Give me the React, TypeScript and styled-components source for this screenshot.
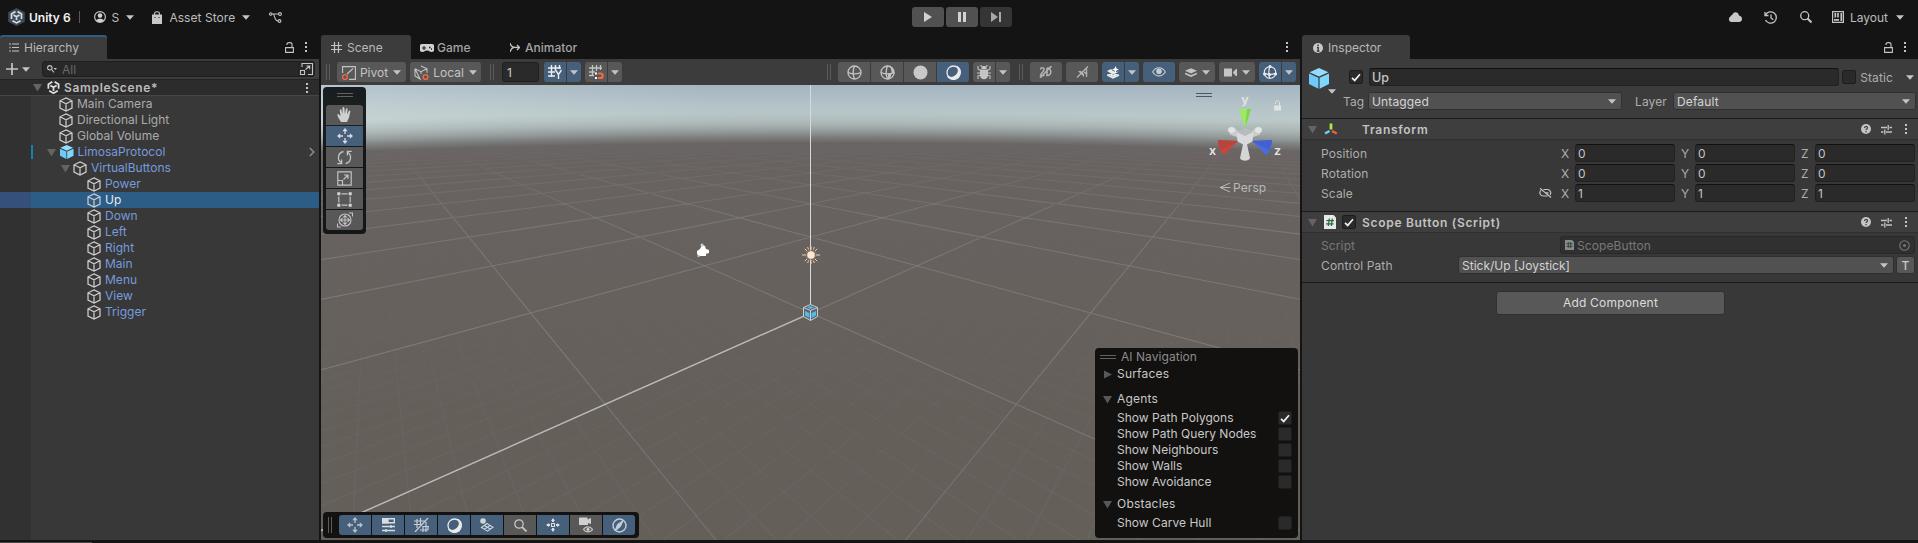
import React from 'react';
import styled, { createGlobalStyle, css } from 'styled-components';

const GlobalStyle = createGlobalStyle`
  * { box-sizing: border-box; }
  html, body { margin: 0; padding: 0; background: #141414; overflow: hidden; }
  body { font-family: Inter, "Liberation Sans", sans-serif; font-size: 12px; color: #c4c4c4; letter-spacing: 0; }
`;

/* ---------- shell ---------- */
const Window = styled.div`
  width: 1918px; height: 543px; background: #141414;
  display: flex; flex-direction: column; overflow: hidden;
`;
const AppBar = styled.header`
  height: 35px; flex: none; display: grid; grid-template-columns: 912px 100px 1fr;
  align-items: start; background: #141414;
`;
const BarGroup = styled.div<{ $end?: boolean }>`
  height: 34px; display: flex; align-items: center;
  ${p => p.$end && css`justify-content: flex-end; padding-right: 14px;`}
`;
const BarItem = styled.span<{ $ml?: number; $bold?: boolean; $spacing?: number }>`
  margin-left: ${p => p.$ml ?? 0}px; white-space: nowrap;
  font-weight: ${p => (p.$bold ? 600 : 400)};
  color: ${p => (p.$bold ? '#f2f2f2' : '#bcbcbc')};
  letter-spacing: ${p => p.$spacing ?? 0.1}px;
`;
const BarRule = styled.i`width: 1px; height: 12px; background: #5a5a5a; margin-left: 8px;`;
const PlayGroup = styled.div`display: flex; gap: 2px; padding-top: 7px;`;
const PlayButton = styled.button<{ $off?: boolean }>`
  width: 32px; height: 20px; border: 0; padding: 0; border-radius: 3px;
  background: ${p => (p.$off ? '#353535' : '#515151')}; display: grid; place-items: center;
`;
const Workspace = styled.main`
  height: 505px; flex: none; display: grid; grid-template-columns: 319px 979px 616px; column-gap: 2px;
`;
const Footer = styled.footer`height: 3px; padding-top: 2px;`;
const FooterMark = styled.div`width: 92px; height: 1px; background: #454545;`;

/* ---------- panels ---------- */
const Panel = styled.section`display: flex; flex-direction: column; min-width: 0;`;
const TabStrip = styled.div`height: 24px; flex: none; display: flex; align-items: center; background: #141414;`;
const Tab = styled.div<{ $w: number; $active?: boolean; $focus?: boolean; $pad?: number; $gap?: number }>`
  width: ${p => p.$w}px; height: 24px; display: flex; align-items: center;
  gap: ${p => p.$gap ?? 5}px; padding: 1px 0 0 ${p => p.$pad ?? 9}px; border-radius: 3px 3px 0 0; white-space: nowrap;
  color: ${p => (p.$active ? '#b8b8b8' : '#a4a4a4')};
  font-weight: ${p => (p.$active ? 400 : 500)};
  background: ${p => (p.$active ? '#3c3c3c' : 'transparent')};
  box-shadow: ${p => (p.$focus ? 'inset 0 2px 0 #2c5d87' : 'none')};
`;
const TabTools = styled.div<{ $gap?: number; $pr: number }>`
  margin-left: auto; padding-right: ${p => p.$pr}px; display: flex; align-items: center; gap: ${p => p.$gap ?? 0}px;
`;

/* ---------- hierarchy ---------- */
const SearchRow = styled.div`
  height: 20px; flex: none; background: #3c3c3c; display: flex; align-items: center; padding: 0 4px 0 6px;
`;
const SearchField = styled.div`
  margin-left: 12px; flex: 1; height: 16px; background: #282828; border: 1px solid #1e1e1e;
  border-radius: 3px; display: flex; align-items: center; color: #686868; padding-left: 4px;
  & > span { margin-left: 5px; }
  & > svg:last-child { margin-left: auto; }
`;
const Tree = styled.div`flex: 1; display: flex; flex-direction: column; background: linear-gradient(90deg, #313131 31px, #383838 31px);`;
const SceneRow = styled.div`
  height: 17px; flex: none; display: flex; align-items: center; padding-left: 33px; padding-right: 10px;
  background: #2c2c2c; border-bottom: 1px solid #464646; border-top: 1px solid #222; font-weight: 600; color: #bdbdbd;
  letter-spacing: 0.68px;
  & > span { margin-left: 4px; }
  & > svg:last-child { margin-left: auto; }
`;
const TreeRow = styled.div<{ $x: number; $selected?: boolean; $prefab?: boolean }>`
  height: 16px; flex: none; display: flex; align-items: center; padding-left: ${p => p.$x}px; padding-right: 4px;
  color: ${p => (p.$selected ? '#e4ecf2' : p.$prefab ? '#769bdc' : '#ababab')};
  ${p => p.$selected && css`background: linear-gradient(90deg, #34507b 31px, #2c5d87 31px);`}
  & > span { margin-left: 4px; margin-top: -1px; letter-spacing: 0.02px; }
`;
const Override = styled.i`width: 2px; height: 14px; background: #0f81be; margin: 0 14px 0 31px;`;
const Chevron = styled.svg`margin-left: auto;`;

/* ---------- scene ---------- */
const SceneBar = styled.div`
  height: 26px; flex: none; background: #3c3c3c; display: flex; align-items: center; padding: 0 4px 0 5px;
`;
const Grip = styled.i<{ $ml?: number; $mr?: number; $h?: number }>`
  width: 4px; height: ${p => p.$h ?? 16}px; margin-left: ${p => p.$ml ?? 0}px; margin-right: ${p => p.$mr ?? 0}px;
  border-left: 1px solid #5c5c5c; border-right: 1px solid #5c5c5c; flex: none;
`;
const TopGrip = styled.i`
  display: block; width: 16px; height: 4px; border-top: 1px solid #636363; border-bottom: 1px solid #636363;
`;
const ToolButton = styled.button<{ $w?: number; $on?: boolean; $ml?: number; $shape?: string; $gap?: number }>`
  width: ${p => p.$w ?? 32}px; height: 20px; flex: none; border: 0; padding: 0;
  margin-left: ${p => p.$ml ?? 4}px; border-radius: ${p => p.$shape ?? '3px'};
  background: ${p => (p.$on ? '#46607c' : '#585858')};
  color: #c4c4c4; font: inherit; letter-spacing: inherit;
  display: flex; align-items: center; justify-content: center; gap: ${p => p.$gap ?? 5}px;
`;
const SizeInput = styled.div`
  width: 37px; height: 20px; margin-left: 8px; background: #2a2a2a; border: 1px solid #1f1f1f; border-radius: 3px;
  display: flex; align-items: center; padding-left: 4px; color: #d0d0d0;
`;
const Spacer = styled.i`flex: 1;`;
const Viewport = styled.div`position: relative; flex: 1; overflow: hidden; background: #67625d;`;
const Backdrop = styled.svg`display: block;`;
const ToolPalette = styled.div`
  position: absolute; left: 2px; top: 2px; width: 43px; height: 147px; border-radius: 4px; background: rgba(14, 16, 17, 0.93);
  display: flex; flex-direction: column; align-items: center; gap: 1px; padding-top: 6px;
  & > i { margin-bottom: 7px; }
`;
const ToolStrip = styled.div`
  position: absolute; left: 2px; top: 427px; width: 316px; height: 26px; border-radius: 4px; background: #131211;
  display: flex; align-items: center; padding-left: 5px;
`;
const NavPanel = styled.div`
  position: absolute; left: 774px; top: 263px; width: 203px; height: 190px; border-radius: 4px;
  background: rgba(15, 14, 13, 0.97); padding: 1px 6px 0 5px; letter-spacing: 0.03px; color: #c8c8c8;
`;
const NavRow = styled.div<{ $mt?: number; $head?: boolean; $dim?: boolean }>`
  height: 16px; margin-top: ${p => p.$mt ?? 0}px; display: flex; align-items: center;
  padding-left: ${p => (p.$dim ? 0 : p.$head ? 3 : 17)}px; gap: 5px; color: ${p => (p.$dim ? '#8c8c8c' : '#c8c8c8')};
  letter-spacing: ${p => (p.$dim ? 0.05 : p.$head ? 0.2 : 0.03)}px;
  & > div { margin-left: auto; }
`;
const NavLabel = styled.span`margin-top: -2px;`;
const GizmoView = styled.svg`position: absolute; left: 879px; top: 0; overflow: visible;`;

/* ---------- inspector ---------- */
const InspectorBody = styled.div`flex: 1; background: #383838; display: flex; flex-direction: column;`;
const ObjectHeader = styled.div`
  height: 60px; flex: none; background: #3c3c3c; border-bottom: 1px solid #1a1a1a; display: flex;
  padding: 9px 3px 0 7px;
`;
const ObjectIcon = styled.div`width: 34px; flex: none;`;
const HeaderLines = styled.div`flex: 1; display: flex; flex-direction: column; gap: 6px;`;
const Line = styled.div`height: 18px; display: flex; align-items: center;`;
const Check = styled.div`
  width: 14px; height: 14px; flex: none; background: #2a2a2a; border: 1px solid #1d1d1d; border-radius: 2px;
  display: grid; place-items: center;
`;
const Field = styled.div<{ $w?: number; $big?: boolean; $ml?: number }>`
  ${p => (p.$w ? css`width: ${p.$w}px; flex: none;` : css`flex: 1;`)}
  height: 18px; margin-left: ${p => p.$ml ?? 0}px; background: #2a2a2a; border: 1px solid #212121; border-top-color: #111;
  border-radius: 3px; padding-left: 2px; display: flex; align-items: center; color: #c4c4c4;
  font-size: ${p => (p.$big ? 12.5 : 12)}px; ${p => p.$big && css`font-weight: 500;`}
`;
const Dropdown = styled.div<{ $w: number; $spacing?: number }>`
  width: ${p => p.$w}px; height: 18px; background: #515151; border: 1px solid #303030; border-radius: 3px;
  display: flex; align-items: center; justify-content: space-between; padding: 0 5px 0 3px; color: #d4d4d4;
  letter-spacing: ${p => p.$spacing ?? 0.15}px;
`;
const Label = styled.span<{ $w?: number; $ml?: number; $dim?: boolean }>`
  ${p => p.$w && css`width: ${p.$w}px;`} margin-left: ${p => p.$ml ?? 0}px; flex: none; white-space: nowrap;
  color: ${p => (p.$dim ? '#787878' : '#adadad')}; letter-spacing: 0.12px;
`;
const ComponentHeader = styled.div`
  height: 21px; flex: none; background: #3e3e3e; border-bottom: 1px solid #303030; display: flex; align-items: center;
  padding: 0 10px 0 6px;
`;
const ComponentTitle = styled.h2<{ $ml: number }>`
  margin: 0 auto 0 ${p => p.$ml}px; font-size: 12px; font-weight: 600; color: #c2c2c2; letter-spacing: 0.7px;
`;
const HeaderTools = styled.div`display: grid; grid-template-columns: 20px 23px 4px; align-items: center;`;
const Properties = styled.div<{ $h: number; $pt: number }>`
  height: ${p => p.$h}px; flex: none; padding: ${p => p.$pt}px 3px 0 19px; display: flex; flex-direction: column; gap: 2px;
  border-bottom: 1px solid #1a1a1a;
`;
const Axis = styled(Label)`width: 14px; font-size: 12px;`;
const ObjectField = styled.div`
  width: 355px; height: 18px; background: #303030; border: 1px solid #292929; border-radius: 3px; display: flex;
  align-items: center; padding: 0 4px 0 3px; gap: 3px; color: #787878; letter-spacing: 0.1px;
  & > svg:last-child { margin-left: auto; }
`;
const TypeButton = styled.button`
  width: 19px; height: 18px; margin-left: 2px; border: 1px solid #303030; border-radius: 3px; background: #585858;
  color: #c8c8c8; font: 500 12px Inter, sans-serif; padding: 0;
`;
const AddButton = styled.button`
  width: 229px; height: 24px; margin: 8px 0 0 194px; border: 1px solid #303030; border-radius: 3px; background: #585858;
  color: #dcdcdc; font: 400 12px Inter, sans-serif; letter-spacing: 0.2px; padding: 0 0 1px;
`;

/* ---------- icons ---------- */
type G = { w?: number; h?: number; children?: React.ReactNode; ml?: number; sw?: number; c?: string };
const Svg = styled.svg<{ $ml: number }>`display: block; flex: none; margin-left: ${p => p.$ml}px;`;
const Gap = styled.i<{ $w: number }>`width: ${p => p.$w}px; flex: none;`;
const Icon = ({ w = 16, h = 16, children, ml = 0, sw = 1.1, c = '#c4c4c4' }: G) => (
  <Svg $ml={ml} width={w} height={h} viewBox={`0 0 ${w} ${h}`} fill="none" stroke={c} strokeWidth={sw}>{children}</Svg>
);
const Caret = ({ ml = 0, c = '#c4c4c4' }: { ml?: number; c?: string }) => (
  <Icon w={8} h={5} ml={ml}><path d="M0 .2h8L4 4.8z" fill={c} stroke="none" /></Icon>
);
const Fold = ({ closed = false, c = '#646464' }: { closed?: boolean; c?: string }) => (
  <Icon w={9} h={9}><path d={closed ? 'M1 .5v8L9 4.5z' : 'M0 1h9L4.5 8.5z'} fill={c} stroke="none" /></Icon>
);
const Dots = ({ ml = 0 }: { ml?: number }) => (
  <Icon w={4} h={12} ml={ml}><path d="M1 1h2v2H1zM1 5h2v2H1zM1 9h2v2H1z" fill="#c4c4c4" stroke="none" /></Icon>
);
const Lock = ({ ml = 0 }: { ml?: number }) => (
  <Icon w={9} h={11} ml={ml}><path d="M.6 5.600h7.800v4.800H.6zM2 3V2.200C2 1.200 2.800.6 4.300.6h.6C6.300.6 7 1.200 7 2.400v3.200" /></Icon>
);
const Cube = ({ c = '#cccccc' }: { c?: string }) => (
  <Icon w={14} h={15} c={c} sw={1.250}><path d="M7 .9l6 2.900v7.200l-6 3-6-3V3.800zM1 3.800l6 2.900 6-2.900M7 6.700v7.300" /></Icon>
);
const SolidCube = ({ size = 14 }: { size?: number }) => (
  <Svg $ml={0} width={size} height={size * 1.05} viewBox="0 0 20 21">
    <path d="M10 0l9.400 4.200L10 8.400.6 4.200z" fill="#93dcff" />
    <path d="M0 5.500l9.400 4.200v11L0 16z" fill="#6fcaf8" />
    <path d="M20 5.500l-9.400 4.200v11L20 16z" fill="#7fd6fd" />
  </Svg>
);
const UnityMark = ({ size = 14, c = '#e0e0e0' }: { size?: number; c?: string }) => (
  <Svg $ml={0} width={size} height={size} viewBox="0 0 14 14" fill="none" stroke={c} strokeWidth="1.900">
    <path d="M5.800.9L1.500 3.400v5M8.200.9l4.300 2.500v5M2.400 10.600L7 13.100l4.600-2.500M3.600 4.800L7 6.800l3.400-2M7 6.800v4" />
  </Svg>
);
const Tick = () => <Icon w={10} h={9} sw={1.700} c="#eee"><path d="M1 4.800l2.700 2.600L9 1.200" /></Icon>;
const MoveIcon = ({ c = '#d6dce2' }: { c?: string }) => (
  <Icon c={c} sw={1.300}>
    <path d="M8 2v4M8 10v4M2 8h4M10 8h4" />
    <path d="M8 0l2.700 3.200H5.300zM8 16l2.700-3.200H5.300zM0 8l3.200-2.700v5.400zM16 8l-3.200-2.700v5.400z" fill={c} stroke="none" />
  </Icon>
);
const HashGrid = ({ c = '#c4c4c4' }: { c?: string }) => (
  <Icon w={11} h={11} c={c} sw={1.200}><path d="M3.500 0v11M7.500 0v11M0 3.500h11M0 7.500h11" /></Icon>
);
const Help = () => (
  <Icon w={10} h={10}><circle cx="5" cy="5" r="5" fill="#c4c4c4" stroke="none" /><path d="M3.500 4c0-2 3-2 3-.2 0 1.200-1.500 1-1.500 2.300M5 7v1.200" stroke="#3a3a3a" strokeWidth="1.200" /></Icon>
);
const Preset = () => (
  <Icon w={11} h={11} sw={1.300}><path d="M0 3.500h6M8.500 3.500H11M0 8h2.500M5 8h6M7.200 1v5M3.800 5.500v5" /></Icon>
);
const Script = ({ dim = false }: { dim?: boolean }) => (
  <Icon w={dim ? 9 : 12} h={dim ? 10 : 14} ml={dim ? 1 : 0}>
    {dim ? <><path d="M0 0h7l2 2v8H0z" fill="#8a8a8a" stroke="none" /><path d="M3.300 2v6M5.700 2v6M1.500 3.700h6M1.500 6.300h6" stroke="#2d5138" strokeWidth="1" /></>
      : <><path d="M0 0h9.500L12 2.500V14H0z" fill="#e8e8e8" stroke="none" /><path d="M5.300 3.500l-1 7.500M8.300 3.500l-1 7.500M2.500 5.700h7.500M2 8.800h7.500" stroke="#256c37" strokeWidth="1.200" /></>}
  </Icon>
);

const Sphere = ({ kind }: { kind: number }) => (
  <Icon w={15} h={15} sw={1.300} c={kind === 3 ? '#e8e8e8' : '#c4c4c4'}>
    {kind === 2 ? <circle cx="7.500" cy="7.500" r="7" fill="#c8c8c8" stroke="none" /> : <>
      {kind === 1 && <path d="M7.500 14.500A7 7 0 0 0 14.500 7.500C12 9 11 8.500 8 8.500z M9 .8A7 7 0 0 1 9 14.300C13 10 12 4 9 .8z" fill="#c4c4c4" stroke="none" />}
      {kind === 3 && <path d="M11 1.500a6.800 6.800 0 0 1-9.500 9.500A6.800 6.800 0 0 0 14 9 6.800 6.800 0 0 0 11 1.500z" fill="#f0f0f0" />}
      <circle cx="7.500" cy="7.500" r="6.500" />
      {kind < 2 && <path d="M1 7.500c4 1.800 9 1.800 13 0M7.500 1c-1.700 4-1.700 9 0 13" />}
    </>}
  </Icon>
);

/* ---------- scene backdrop ---------- */
const HORIZON = 33;
const DEPTH = 1.568;
const project = (i: number, j: number): [number, number] => {
  const t = DEPTH + (i + j) / 2;
  return [489.8 + (439 * (i - j)) / 2 / t, HORIZON + 305.8 / t];
};
const gridLine = (k: number, flip: boolean) => {
  const near = -2 * DEPTH - k + 1.1;
  const a = flip ? project(near, k) : project(k, near);
  const b = flip ? project(60, k) : project(k, 60);
  return `M${a[0].toFixed(1)} ${a[1].toFixed(1)}L${b[0].toFixed(1)} ${b[1].toFixed(1)}`;
};
const majors = Array.from({ length: 50 }, (_, n) => n - 12);
const minors = Array.from({ length: 140 }, (_, n) => (n - 70) / 10).filter(v => !Number.isInteger(v));
const pathFor = (ks: number[]) => ks.map(k => gridLine(k, false) + gridLine(k, true)).join('');

const SceneBackdrop = () => (
  <Backdrop width={979} height={455} viewBox="0 0 979 455" fill="none">
    <defs>
      <linearGradient id="sky" x1="0" y1="0" x2="0" y2="75" gradientUnits="userSpaceOnUse">
        <stop offset="0" stopColor="#a4b4c1" /><stop offset=".25" stopColor="#b3c2c8" />
        <stop offset=".48" stopColor="#bccac9" /><stop offset="1" stopColor="#aab5b5" />
      </linearGradient>
      <linearGradient id="haze" x1="0" y1="0" x2="1" y2="0">
        <stop offset="0" stopColor="#dfeaea" stopOpacity=".32" /><stop offset=".4" stopColor="#dfeaea" stopOpacity="0" />
      </linearGradient>
      <radialGradient id="ground" cx="510" cy="13000" r="13000" gradientUnits="userSpaceOnUse">
        <stop offset="0" stopColor="#655f5a" /><stop offset=".975" stopColor="#655f5a" /><stop offset=".9945" stopColor="#686361" />
        <stop offset=".99555" stopColor="#6a6565" /><stop offset=".9960" stopColor="#767676" stopOpacity=".9" />
        <stop offset=".9970" stopColor="#98a0a0" stopOpacity=".5" /><stop offset=".9980" stopColor="#a8b2b2" stopOpacity="0" />
      </radialGradient>
      <linearGradient id="fadeMajor" x1="0" y1="0" x2="0" y2="455" gradientUnits="userSpaceOnUse">
        <stop offset=".12" stopColor="#fff" stopOpacity="0" /><stop offset=".18" stopColor="#fff" stopOpacity=".25" />
        <stop offset=".3" stopColor="#fff" stopOpacity=".8" /><stop offset=".55" stopColor="#fff" stopOpacity="1" /><stop offset="1" stopColor="#fff" stopOpacity=".7" />
      </linearGradient>
      <linearGradient id="fadeMinor" x1="0" y1="0" x2="0" y2="455" gradientUnits="userSpaceOnUse">
        <stop offset=".3" stopColor="#fff" stopOpacity="0" /><stop offset="1" stopColor="#fff" stopOpacity="1" />
      </linearGradient>
      <mask id="major"><rect width="979" height="455" fill="url(#fadeMajor)" /></mask>
      <mask id="minor"><rect width="979" height="455" fill="url(#fadeMinor)" /></mask>
    </defs>
    <rect width="979" height="100" fill="url(#sky)" />
    <rect width="979" height="70" fill="url(#haze)" />
    <rect width="979" height="455" fill="url(#ground)" />
    <g mask="url(#minor)"><path d={pathFor(minors)} stroke="#8a8886" strokeOpacity=".27" strokeWidth=".8" /></g>
    <g mask="url(#major)"><path d={pathFor(majors)} stroke="#8a8988" strokeOpacity=".62" strokeWidth="1.100" /></g>
    <path d={`M${project(0, 0).join(' ')}L${project(-2.1, 0).join(' ')}`} stroke="#bdbbb8" strokeWidth="1.400" />
    <path d="M489.500 0v227" stroke="#d6dadb" strokeWidth="1" />
    <path d="M376 169v-3l3-2 2-4 3 1 1 3 3 1v3l-3 1v2h-6l-2-1z" fill="#fff" />
    <circle cx="381" cy="160" r="1.500" fill="#cfcfcf" /><path d="M376.500 170.500l2 1" stroke="#cfcfcf" strokeWidth="1.500" />
    <circle cx="490" cy="170" r="5.500" fill="#8f7a6c" fillOpacity=".6" />
    <circle cx="490" cy="170" r="3.800" fill="#ffe6d2" />
    <path d="M490 161v4M490 175v4M481 170h4M495 170h4M483.800 163.800l2.300 2.300M493.900 173.900l2.300 2.300M496.200 163.800l-2.300 2.300M486.100 173.900l-2.300 2.300M486.600 162l1 2.500M493.400 162l-1 2.500M486.600 178l1-2.500M493.400 178l-1-2.500" stroke="#f0cdb4" strokeWidth="1" />
    <path d="M489.500 219.500l7 3v9l-7 4-7-4v-9z" fill="#55656f" stroke="#cbd0d3" strokeWidth="1" />
    <path d="M484 226l4.500 2v5l-4.500-2.500zM495 226l-4.500 2v5l4.500-2.500zM489.500 221l3.500 1.500-3.500 1.500-3.500-1.500z" fill="#57b8ea" />
    <path d="M482.500 222.500l7 3 7-3M489.500 225.500v10" stroke="#cbd0d3" strokeWidth="1" />
  </Backdrop>
);

const Gizmo = () => (
  <GizmoView width="100" height="125" viewBox="0 0 100 125" fill="none">
    <path d="M-4 8.500h16M-4 11.500h16" stroke="#50565a" />
    <g fill="#c9cbcd">
      <path d="M45 52L34 42.500c-3 1-5 4-4 7L42 54z" /><path d="M45 52l11-9.500c3 1 5 4 4 7L48 54z" />
      <path d="M43.500 57L40 73c1 3.500 9 3.500 10 0L46.500 57z" fill="#d4d5d6" />
    </g>
    <ellipse cx="31.500" cy="45" rx="3.500" ry="3" fill="#e2e3e3" /><ellipse cx="58.500" cy="45" rx="3.500" ry="3" fill="#e2e3e3" />
    <path d="M45 43.500l8.500 3.500-1 9.500-7.500 4-7.500-4-1-9.500z" fill="#d9dadc" /><path d="M45 43.500l8.500 3.500-8.500 4-8.500-4z" fill="#b9bcbf" />
    <path d="M45 43L39 24h12z" fill="#9bea62" /><path d="M45 43l2-19h4z" fill="#84d14d" />
    <path d="M38 56l-20-1c-1 4 2 12 6 15z" fill="#c8453c" /><path d="M38 56L18 55l3 10z" fill="#a9473f" opacity=".6" />
    <path d="M52 56l20-1c1 4-2 12-6 15z" fill="#4b6cdf" /><path d="M52 56l20-1-3 10z" fill="#3f5dc4" opacity=".7" />
    <path d="M74 20.500h7v5h-7z" fill="#dfe5e5" /><path d="M75.500 19v-1.500c0-2 4-2 4 0V21" stroke="#dfe5e5" />
    <g fill="#e4e6e6" fontFamily="Inter" fontWeight="600" fontSize="12.500" textAnchor="middle">
      <text x="45" y="18.500">y</text><text x="12.500" y="70">x</text><text x="77.500" y="70">z</text>
    </g>
    <path d="M30 98l-10 4.500 10 4.500M20 102.500h10" stroke="#b9b7b5" />
    <text x="33" y="106.500" fill="#bab8b6" fontFamily="Inter" fontSize="12" letterSpacing=".1">Persp</text>
  </GizmoView>
);

const children = ['Power', 'Up', 'Down', 'Left', 'Right', 'Main', 'Menu', 'View', 'Trigger'];

const Hierarchy = () => (
  <Panel>
    <TabStrip>
      <Tab $w={107} $active $focus><Icon w={10} h={9}><path d="M0 1h2M3 1h7M3 4.500h7M3 8h7M1 3.700v1.500M1 7.300v1.500" /></Icon>Hierarchy</Tab>
      <TabTools $pr={11} $gap={10}><Lock /><Dots /></TabTools>
    </TabStrip>
    <SearchRow>
      <Icon w={12} h={12} sw={1.700}><path d="M6 0v12M0 6h12" /></Icon><Caret ml={4} />
      <SearchField>
        <Icon w={10} h={8}><circle cx="2.800" cy="2.800" r="2.200" /><path d="M4.500 4.500L7 7.300" /><path d="M6.500 3h3.500L8.200 5z" fill="#c4c4c4" stroke="none" /></Icon>
        <span>All</span>
        <Icon w={16} h={14}><path d="M0-1v16" stroke="#1e1e1e" /><path d="M4 5V1.500h10.500v11H10M2.500 8.500h4v4h-4zM7.500 7.500l4-3.500M8.500 4h3.200v3.200" /></Icon>
      </SearchField>
    </SearchRow>
    <Tree>
      <SceneRow><Fold /><Gap $w={5} /><UnityMark size={13} /><span>SampleScene*</span><Dots /></SceneRow>
      {['Main Camera', 'Directional Light', 'Global Volume'].map(n => <TreeRow key={n} $x={59}><Cube /><span>{n}</span></TreeRow>)}
      <TreeRow $x={0} $prefab><Override /><Fold /><Gap $w={4} /><SolidCube size={13.500} /><span>LimosaProtocol</span>
        <Chevron width="6" height="10" viewBox="0 0 6 10" fill="none" stroke="#8c8c8c" strokeWidth="1.500"><path d="M.8 1l4 4-4 4" /></Chevron></TreeRow>
      <TreeRow $x={61} $prefab><Fold /><Gap $w={3} /><Cube /><span>VirtualButtons</span></TreeRow>
      {children.map(n => <TreeRow key={n} $x={87} $prefab $selected={n === 'Up'}><Cube /><span>{n}</span></TreeRow>)}
    </Tree>
  </Panel>
);

const L = '3px 0 0 3px';
const R = '0 3px 3px 0';

const SceneToolbar = () => (
  <SceneBar>
    <Grip $mr={3} />
    <ToolButton $w={69} $gap={4}><Icon w={14} h={15}><path d="M.6 8V1.600h12.800v12.800H7M5 9l6-5.500" /><circle cx="3" cy="12" r="2.400" stroke="#f26b41" strokeWidth="1.400" /></Icon>Pivot<Caret ml={1} /></ToolButton>
    <ToolButton $w={71} $gap={4}><Icon w={15} h={15}><path d="M7 .9l6 2.900v4M6 14L1 11V3.800zM1 3.800v7.200l5 3M1 3.800l6 2.900 6-2.900M7 6.700V9" /><circle cx="11.500" cy="12" r="2.400" stroke="#f26b41" strokeWidth="1.400" /></Icon>Local<Caret ml={1} /></ToolButton>
    <Grip $ml={9} /><SizeInput>1</SizeInput>
    <ToolButton $w={22} $on $ml={5} $shape={L}><Icon w={15} h={15} c="#eee" sw={1.400}><path d="M3.500 0v12M7.500 0v6M11.500 0v4M0 3h13M0 7h7M0 11h7M7.500 5l3 4.500L13.500 5M10.500 9.500V14" /></Icon></ToolButton>
    <ToolButton $w={14} $on $ml={1} $shape={R}><Caret /></ToolButton>
    <ToolButton $w={22} $shape={L}><Icon w={15} h={15} sw={1.300}><path d="M3.500 0v11M7.500 0v6M11.500 0v5M0 3h13M0 7h6M0 10.500h5" /><path d="M9 8.500h2.500a2.200 2.200 0 0 1 0 4.500H9" stroke="#f26b41" strokeWidth="2.200" /><path d="M6 7.500h2v2H6zM6 12h2v2H6z" fill="#fff" stroke="none" /></Icon></ToolButton>
    <ToolButton $w={14} $ml={1} $shape={R}><Caret /></ToolButton>
    <Spacer />
    <Grip $mr={3} />
    <ToolButton $shape={L}><Sphere kind={0} /></ToolButton>
    <ToolButton $ml={1} $shape="0"><Sphere kind={1} /></ToolButton>
    <ToolButton $ml={1} $shape="0"><Sphere kind={2} /></ToolButton>
    <ToolButton $ml={1} $shape={R} $on><Sphere kind={3} /></ToolButton>
    <ToolButton $w={22} $shape={L}><Icon w={14} h={15}><path d="M4.500 2.500C5 .5 9 .5 9.500 2.500V4h-5zM3 4.500h8v6c0 5-8 5-8 0z" fill="#c4c4c4" stroke="none" /><path d="M1 1v3l3 2M13 1v3l-3 2M0 8h14M1 14v-3l3-1M13 14v-3l-3-1M5 2L3.500 0M9 2l1.500-2" /></Icon></ToolButton>
    <ToolButton $w={14} $ml={1} $shape={R}><Caret /></ToolButton>
    <Grip $ml={9} $mr={3} />
    <ToolButton><Icon w={14} h={12} c="#b4b4b4" sw={1.500}><path d="M1.500 3.500C2 1 5.500 1.500 5 4 4.500 6 1.500 7.500 1.500 9.500h4M8 2v7.500c5 .5 5-7.500 0-7.500M1 12L12.500 0" /></Icon></ToolButton>
    <ToolButton><Icon w={13} h={12} c="#b4b4b4" sw={1.300}><path d="M1 11.500L12 .5M8 6l2.500 2V3" /><path d="M2 5h3l3 3v3z" fill="#b4b4b4" stroke="none" /><path d="M10.500 6v5" /></Icon></ToolButton>
    <ToolButton $w={22} $on $shape={L}><Icon w={13} h={13} c="#ececec"><path d="M0 5l4-2 2 2 3 1 3-.5-6 3.300zM0 8l6 3 6-3" fill="#ececec" stroke="none" /><path d="M0 9l6 2.800L12 9" strokeWidth="1.500" /><path d="M8.500 0l1 2.500L12 3.500l-2.500 1-1 2.500-1-2.500L5 3.500l2.500-1z" fill="#fff" stroke="none" /></Icon></ToolButton>
    <ToolButton $w={14} $on $ml={1} $shape={R}><Caret /></ToolButton>
    <ToolButton $on><Icon w={14} h={10} c="#c4ccd4"><path d="M.6 5C4-.6 10-.6 13.400 5 10 10.200 4 10.200.6 5z" /><circle cx="7" cy="4.300" r="2.800" fill="#c4ccd4" stroke="none" /></Icon></ToolButton>
    <ToolButton $w={36}><Icon w={12} h={9}><path d="M0 2.800L6 .2l6 2.600-6 2.600z" fill="#c4c4c4" stroke="none" /><path d="M0 5.500l6 2.600 6-2.600" strokeWidth="1.600" /></Icon><Caret /></ToolButton>
    <ToolButton $w={36}><Icon w={13} h={9}><path d="M0 .5h8v8H0zM9 4l3-3h1v7h-1L9 5z" fill="#c4c4c4" stroke="none" /></Icon><Caret /></ToolButton>
    <ToolButton $w={22} $on $shape={L}><Icon w={14} h={14} c="#ececec"><circle cx="7" cy="7.500" r="5.800" /><path d="M1 8c4 2 8 2 12 0M7 1c-1.500 4-1.500 9 0 13" /><path d="M7 1.500h.1M1.500 9h.1M12.500 9h.1M6.500 9.500h.1" strokeWidth="3" strokeLinecap="round" /></Icon></ToolButton>
    <ToolButton $w={14} $on $ml={1} $shape={R}><Caret /></ToolButton>
  </SceneBar>
);

const Palette = () => (
  <ToolPalette>
    <TopGrip />
    <ToolButton $w={37} $ml={0} $shape="3px 3px 0 0"><Icon w={15} h={16}><path d="M4 15L1 10 .3 7.500c.5-1 1.500-.5 2.200.8L3.500 9 2.700 3c.3-1.300 1.500-1 1.700 0L5.500 7V1.200c.3-1.500 1.700-1.500 1.900 0L7.900 7l1-5c.4-1.300 1.800-1 1.700.3L10 7.500 11.800 4c.6-1 1.700-.5 1.500.5L12 10.500 10 15z" fill="#d0d0d0" stroke="none" /></Icon></ToolButton>
    <ToolButton $w={37} $ml={0} $shape="0" $on><MoveIcon /></ToolButton>
    <ToolButton $w={37} $ml={0} $shape="0"><Icon w={15} h={15} sw={1.300}><path d="M6.500 1.500A6.200 6.200 0 0 0 4.300 12.800M.3 13.600h4.300V9.400M8.500 13.600A6.200 6.200 0 0 0 10.700 2.300M14.700 1.400h-4.300v4.200" /></Icon></ToolButton>
    <ToolButton $w={37} $ml={0} $shape="0"><Icon w={15} h={15} sw={1.200}><path d="M.8.8h13.400v13.400H.8zM.8 9.500h4.700v4.700M6.500 8.500L11 4M7 4h4v4" /></Icon></ToolButton>
    <ToolButton $w={37} $ml={0} $shape="0"><Icon w={15} h={15} sw={1.200}><path d="M4.500 1.800h6M4.500 13.200h6M1.800 4.500v6M13.200 4.500v6" /><path d="M.3.3h3v3h-3zM11.700.3h3v3h-3zM.3 11.700h3v3h-3zM11.700 11.700h3v3h-3z" fill="#d6d6d6" stroke="none" /></Icon></ToolButton>
    <ToolButton $w={37} $ml={0} $shape="0 0 3px 3px"><Icon w={16} h={16} sw={1.100}><circle cx="8" cy="8" r="6" /><path d="M8 4v8M4 8h8M6.200 5.500L8 3.500l1.800 2M6.200 10.500L8 12.500l1.800-2M5.500 6.200L3.500 8l2 1.800M10.500 6.200l2 1.800-2 1.800M12 1h3.500v3.500M.5 11.500V15H4" /></Icon></ToolButton>
  </ToolPalette>
);

const Strip = () => (
  <ToolStrip>
    <Grip $mr={7} />
    <ToolButton $ml={0} $on $shape={L}><MoveIcon c="#b9c2cb" /></ToolButton>
    <ToolButton $ml={1} $on $shape="0"><Icon w={13} h={14} sw={1.400} c="#d8dde2"><path d="M.7.7h11.600v4H.7z" /><path d="M.7.7h5.300v4H.7z" fill="#d8dde2" /><path d="M0 8.500h13M0 12.500h13M9 7v3M4 11v3" /></Icon></ToolButton>
    <ToolButton $ml={1} $on $shape="0"><Icon w={15} h={14} c="#c8ced5" sw={1.200}><path d="M3 1v9M6.500 0v7M0 3h11M0 6.500h8M1 14L14 0M9 8v6M12 4v10M14 8v4M6 12h8M9 8.500h6" /></Icon></ToolButton>
    <ToolButton $ml={1} $on $shape="0"><Sphere kind={3} /></ToolButton>
    <ToolButton $ml={1} $on $shape="0"><Icon w={14} h={14} c="#cfd5da"><circle cx="3" cy="3" r="2.800" fill="#cfd5da" stroke="none" /><path d="M7 5.500l6 3.700-5.500 4-6-3.700zM4.500 7.500l6 3.700M10 7.500l-6 4" /></Icon></ToolButton>
    <ToolButton $ml={1} $shape="0"><Icon w={13} h={13} sw={1.300}><circle cx="5" cy="5" r="4.200" /><path d="M8 8l4.500 4.500" strokeWidth="1.800" /></Icon></ToolButton>
    <ToolButton $ml={1} $on $shape="0"><Icon w={14} h={14} c="#d8dde2"><path d="M5.500 5.500h3v3h-3z" /><path d="M7 1v3M7 10v3M1 7h3M10 7h3" strokeWidth="2" /><path d="M7 0l2 3H5zM7 14l2-3H5zM0 7l3-2v4zM14 7l-3-2v4z" fill="#d8dde2" stroke="none" /></Icon></ToolButton>
    <ToolButton $ml={1} $shape="0"><Icon w={14} h={16}><path d="M0 2c0-1 0-1.500 1-1.500h7.500v2L12 1v6L9 6v2H0z" fill="#d0d0d0" stroke="none" /><path d="M4.500 12.500c2-3.500 7-3.500 9 0-2 3-7 3-9 0z" strokeWidth="1.300" /><circle cx="9" cy="12.300" r="1.500" fill="#d0d0d0" stroke="none" /></Icon></ToolButton>
    <ToolButton $ml={1} $on $shape={R}><Icon w={15} h={15} c="#c4ccd4" sw={1.400}><circle cx="7.500" cy="7.500" r="6.500" /><path d="M11 2.500L5.500 6.500 3 13l5.500-4.500z" fill="#c4ccd4" strokeWidth="1" /></Icon></ToolButton>
  </ToolStrip>
);

const NavToggle = ({ label, on = false, mt = 0 }: { label: string; on?: boolean; mt?: number }) => (
  <NavRow $mt={mt}><NavLabel>{label}</NavLabel><Check>{on && <Tick />}</Check></NavRow>
);

const Navigation = () => (
  <NavPanel>
    <NavRow $dim><TopGrip /><NavLabel>AI Navigation</NavLabel></NavRow>
    <NavRow $head $mt={1}><Fold closed c="#585858" /><NavLabel>Surfaces</NavLabel></NavRow>
    <NavRow $head $mt={9}><Fold c="#585858" /><NavLabel>Agents</NavLabel></NavRow>
    <NavToggle label="Show Path Polygons" on mt={3} />
    <NavToggle label="Show Path Query Nodes" />
    <NavToggle label="Show Neighbours" />
    <NavToggle label="Show Walls" />
    <NavToggle label="Show Avoidance" />
    <NavRow $head $mt={6}><Fold c="#585858" /><NavLabel>Obstacles</NavLabel></NavRow>
    <NavToggle label="Show Carve Hull" mt={3} />
  </NavPanel>
);

const Vector = ({ label, v, link = false }: { label: string; v: string; link?: boolean }) => (
  <Line>
    <Label $w={link ? 218 : 240}>{label}</Label>
    {link && <Icon w={13} h={10} sw={1.200}><path d="M4.500 1.500h4a3.300 3.300 0 0 1 2.500 5.300M8.500 8H4A3.200 3.200 0 0 1 2 2.400M6.500 4.800h3M1 .3l11 9.200" /></Icon>}
    <Axis $ml={link ? 9 : 0}>X</Axis><Field $w={100}>{v}</Field>
    <Axis $ml={6}>Y</Axis><Field $w={100}>{v}</Field>
    <Axis $ml={6}>Z</Axis><Field $w={100}>{v}</Field>
  </Line>
);

const Inspector = () => (
  <Panel>
    <TabStrip>
      <Tab $w={108} $active $pad={11}><Icon w={10} h={10}><circle cx="5" cy="5" r="5" fill="#c8c8c8" stroke="none" /><path d="M5 1.500v1.600M4 4.500h1.200V8M3.800 8h2.600" stroke="#333" strokeWidth="1.300" /></Icon>Inspector</Tab>
      <TabTools $pr={11} $gap={10}><Lock /><Dots /></TabTools>
    </TabStrip>
    <InspectorBody>
      <ObjectHeader>
        <ObjectIcon><SolidCube size={20} /><Caret ml={19} /></ObjectIcon>
        <HeaderLines>
          <Line>
            <Gap $w={6} /><Check><Tick /></Check><Field $ml={6} $big>Up</Field>
            <Gap $w={3} /><Check /><Label $ml={4}>Static</Label><Caret ml={13} /><Gap $w={2} />
          </Line>
          <Line><Label $w={25}>Tag</Label><Dropdown $w={254}>Untagged<Caret /></Dropdown><Label $ml={13} $w={38}>Layer</Label><Dropdown $w={243}>Default<Caret /></Dropdown></Line>
        </HeaderLines>
      </ObjectHeader>
      <ComponentHeader>
        <Fold />
        <Icon w={14} h={14} ml={7} sw={2.400}><path d="M7 7.500V1.500" stroke="#b0e748" strokeWidth="2.800" /><path d="M5.500 9L1 11.500" stroke="#74cdf8" /><path d="M8 9l4.800 2.500" stroke="#f5603b" /></Icon>
        <ComponentTitle $ml={24}>Transform</ComponentTitle>
        <HeaderTools><Help /><Preset /><Dots /></HeaderTools>
      </ComponentHeader>
      <Properties $h={72} $pt={4}><Vector label="Position" v="0" /><Vector label="Rotation" v="0" /><Vector label="Scale" v="1" link /></Properties>
      <ComponentHeader>
        <Fold /><Gap $w={7} /><Script /><Gap $w={6} /><Check><Tick /></Check>
        <ComponentTitle $ml={6}>Scope Button (Script)</ComponentTitle>
        <HeaderTools><Help /><Preset /><Dots /></HeaderTools>
      </ComponentHeader>
      <Properties $h={50} $pt={3}>
        <Line><Label $w={239} $dim>Script</Label><ObjectField><Script dim />ScopeButton<Icon w={11} h={11} c="#777"><circle cx="5.500" cy="5.500" r="4.700" /><circle cx="5.500" cy="5.500" r="1.500" fill="#777" stroke="none" /></Icon></ObjectField></Line>
        <Line><Label $w={137}>Control Path</Label><Dropdown $w={436} $spacing={0}>Stick/Up [Joystick]<Caret /></Dropdown><TypeButton>T</TypeButton></Line>
      </Properties>
      <AddButton>Add Component</AddButton>
    </InspectorBody>
  </Panel>
);

export default function App() {
  return (
    <Window>
      <GlobalStyle />
      <AppBar>
        <BarGroup>
          <Icon w={17} h={18} ml={8}><path d="M8.500 0l8.300 4.300v9.400L8.500 18 .2 13.700V4.300z" fill="#3f4a57" stroke="none" /><path d="M7.500 3.500L3.500 6v5M9.500 3.500l4 2.500v5M4.500 12.700l4 2.200 4-2.200M5.500 7l3 1.700 3-1.700M8.500 8.700V12" stroke="#d5dde5" strokeWidth="1.700" /></Icon>
          <BarItem $ml={4} $bold $spacing={0}>Unity 6</BarItem>
          <BarRule />
          <Icon w={12} h={12} ml={14} sw={1.200}><circle cx="6" cy="6" r="5.400" /><circle cx="6" cy="4.600" r="2.300" fill="#d0d0d0" stroke="none" /><path d="M2 9.500C3 7 9 7 10 9.500 8 11.500 4 11.500 2 9.500z" fill="#d0d0d0" stroke="none" /></Icon>
          <BarItem $ml={6}>S</BarItem><Caret ml={7} />
          <Icon w={10} h={13} ml={18}><path d="M0 3.500h10V13H0z" fill="#c8c8c8" stroke="none" /><path d="M2.600 5V2.500C2.600.2 7.400.2 7.400 2.500V5" /><path d="M3 6v1M7 6v1" stroke="#222" /></Icon>
          <BarItem $ml={7} $spacing={0.05}>Asset Store</BarItem><Caret ml={7} />
          <Icon w={13} h={11} ml={19} sw={1.100}><circle cx="1.700" cy="2" r="1.200" /><circle cx="11" cy="2" r="1.400" /><circle cx="10.500" cy="9" r="1.400" /><path d="M3 2h6.500M4 2c2 0 1 6.800 5 6.800" /></Icon>
        </BarGroup>
        <PlayGroup>
          <PlayButton><Icon w={8} h={10}><path d="M0 0l8 5-8 5z" fill="#d2d2d2" stroke="none" /></Icon></PlayButton>
          <PlayButton><Icon w={8} h={10}><path d="M0 0h3v10H0zM5 0h3v10H5z" fill="#d2d2d2" stroke="none" /></Icon></PlayButton>
          <PlayButton $off><Icon w={10} h={10}><path d="M0 0l7 5-7 5zM8 0h2v10H8z" fill="#a8a8a8" stroke="none" /></Icon></PlayButton>
        </PlayGroup>
        <BarGroup $end>
          <Icon w={14} h={10}><path d="M3 10a3 3 0 0 1-.5-5.500C3 3 4 3 4.500 2.500 6-.6 10-.6 11 3.500c4 .5 4 6.500 0 6.500z" fill="#c8c8c8" stroke="none" /></Icon>
          <Icon w={13} h={13} ml={22} sw={1.300}><path d="M1.500 4A5.700 5.700 0 1 1 1.500 9M1 1v3.500h3.500M7 3.500v3.500l2.300 1.800" /></Icon>
          <Icon w={12} h={12} ml={23} sw={1.300}><circle cx="4.700" cy="4.700" r="4" /><path d="M7.500 7.500L11.500 11.500" strokeWidth="2" /></Icon>
          <Icon w={12} h={12} ml={20} sw={1.200}><path d="M.6.6h10.800v10.800H.6z" /><path d="M3.300 2v4.500M6 2v4.500M2 8.800h5M9.300 2v8" strokeWidth="1.700" /></Icon>
          <BarItem $ml={6} $spacing={0}>Layout</BarItem><Caret ml={8} />
        </BarGroup>
      </AppBar>
      <Workspace>
        <Hierarchy />
        <Panel>
          <TabStrip>
            <Tab $w={90} $active $pad={10}><HashGrid />Scene</Tab>
            <Tab $w={90} $pad={9} $gap={3}><Icon w={14} h={8}><path d="M3.500 0h7a3.900 3.900 0 0 1 1 8C9.500 8 9.500 6.500 7 6.500S4.500 8 2.700 8A4 4 0 0 1 3.500 0z" fill="#d0d0d0" stroke="none" /><path d="M4 2v4M2 4h4" stroke="#222" /><path d="M9 3.500h1.500M11 5h1" stroke="#222" strokeWidth="1.500" /></Icon>Game</Tab>
            <Tab $w={100} $pad={9}><Icon w={10} h={9} sw={1.300}><path d="M0 0c1 4.500 3 4.500 9.500 4.500M0 9c1-3 2-4.500 4-4.500M7 2l2.500 2.500L7 7" /></Icon>Animator</Tab>
            <TabTools $pr={11}><Dots /></TabTools>
          </TabStrip>
          <SceneToolbar />
          <Viewport>
            <SceneBackdrop /><Gizmo /><Palette /><Strip /><Navigation />
          </Viewport>
        </Panel>
        <Inspector />
      </Workspace>
      <Footer><FooterMark /></Footer>
    </Window>
  );
}
